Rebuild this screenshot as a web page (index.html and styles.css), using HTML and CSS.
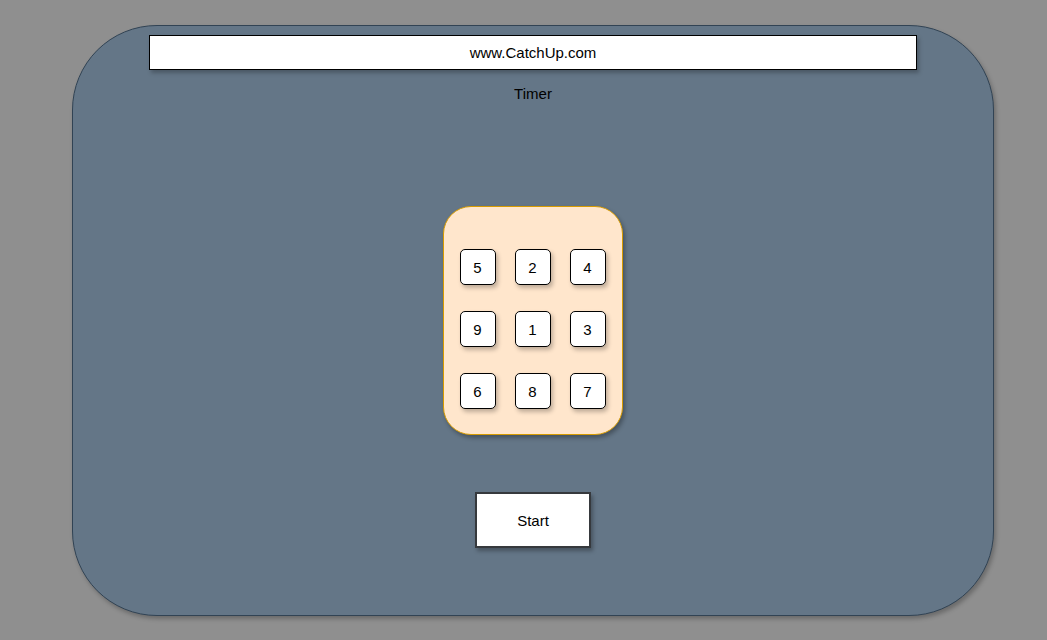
FILE: index.html
```html
<!DOCTYPE html>
<html>
<head>
<meta charset="utf-8">
<link rel="stylesheet" href="styles.css">
</head>
<body>
<div class="page">
  <div class="phone">
    <div class="urlbar">www.CatchUp.com</div>
    <div class="timer">Timer</div>
    <div class="keypad">
      <div class="key">5</div>
      <div class="key">2</div>
      <div class="key">4</div>
      <div class="key">9</div>
      <div class="key">1</div>
      <div class="key">3</div>
      <div class="key">6</div>
      <div class="key">8</div>
      <div class="key">7</div>
    </div>
    <div class="start">Start</div>
  </div>
</div>
</body>
</html>
```

FILE: styles.css
```css
html, body {
  margin: 0;
  padding: 0;
  background: #8f8f8f;
  font-family: "Liberation Sans", Arial, sans-serif;
  color: #000;
}
.page {
  width: 1047px;
  height: 640px;
  padding: 25px 0 0 72px;
  box-sizing: border-box;
}
.phone {
  width: 922px;
  height: 591px;
  box-sizing: border-box;
  background: #647687;
  border: 1px solid #314354;
  border-radius: 85px;
  box-shadow: 2px 3px 4px rgba(0, 0, 0, 0.25);
  display: flex;
  flex-direction: column;
  align-items: center;
  padding-top: 9px;
}
.urlbar {
  width: 768px;
  height: 35px;
  box-sizing: border-box;
  background: #fff;
  border: 1.5px solid #000;
  box-shadow: 2px 3px 4px rgba(0, 0, 0, 0.25);
  display: flex;
  align-items: center;
  justify-content: center;
  font-size: 15px;
}
.timer {
  margin-top: 15px;
  font-size: 15px;
  line-height: 17px;
}
.keypad {
  margin-top: 104px;
  width: 180px;
  height: 229px;
  box-sizing: border-box;
  background: #ffe6cc;
  border: 1.5px solid #d79b00;
  border-radius: 28px;
  box-shadow: 2px 3px 4px rgba(0, 0, 0, 0.3);
  padding: 41.5px 0 0 15.5px;
  display: grid;
  grid-template-columns: repeat(3, 36px);
  grid-template-rows: repeat(3, 36px);
  column-gap: 19px;
  row-gap: 26px;
  align-content: start;
}
.key {
  width: 36px;
  height: 36px;
  box-sizing: border-box;
  background: #fff;
  border: 1.5px solid #000;
  border-radius: 5px;
  box-shadow: 2px 3px 4px rgba(0, 0, 0, 0.25);
  display: flex;
  align-items: center;
  justify-content: center;
  font-size: 15px;
  padding-top: 1px;
}
.start {
  margin-top: 57px;
  width: 116px;
  height: 56px;
  box-sizing: border-box;
  background: #fff;
  border: 2px solid #36393d;
  box-shadow: 2px 3px 4px rgba(0, 0, 0, 0.3);
  display: flex;
  align-items: center;
  justify-content: center;
  font-size: 15px;
}
```
